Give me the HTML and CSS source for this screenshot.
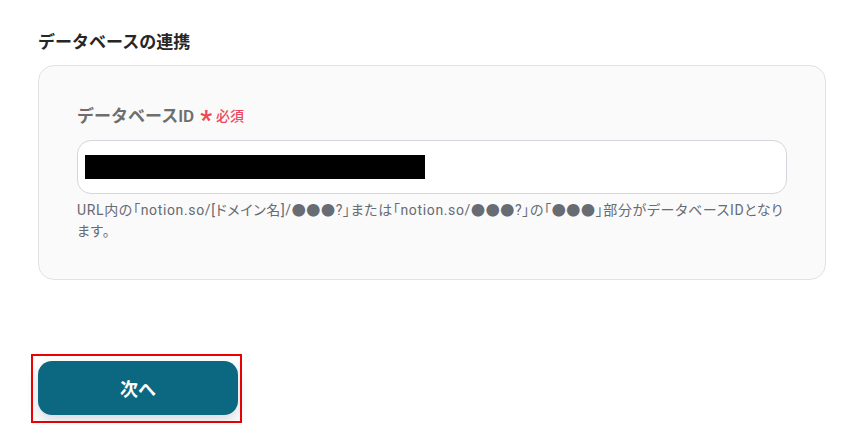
FILE: index.html
```html
<!DOCTYPE html>
<html lang="ja">
<head>
    <meta charset="UTF-8">
    <meta name="viewport" content="width=device-width, initial-scale=1.0">
    <title>データベースの連携</title>
    <link rel="stylesheet" href="styles.css">
</head>
<body>
    <div class="page">
        <h2 class="title">データベースの連携</h2>
        <div class="card">
            <div class="field">
                <label class="label">データベースID <span class="req"><span class="star">*</span>必須</span></label>
                <div class="input">
                    <div class="mask"></div>
                </div>
                <p class="help">URL内の「notion.so/[ドメイン名]/●●●?」または「notion.so/●●●?」の「●●●」部分がデータベースIDとなります。</p>
            </div>
        </div>
        <div class="actions">
            <div class="focus">
                <button class="next">次へ</button>
            </div>
        </div>
    </div>
</body>
</html>
```

FILE: styles.css
```css
body {
    margin: 0;
    background: #ffffff;
    font-family: Roboto, "Noto Sans CJK JP", sans-serif;
    color: #222222;
}

.page {
    padding: 30px 32px 0 38px;
}

.title {
    margin: 0 0 11px;
    font-size: 17px;
    font-weight: 700;
    line-height: 24px;
    color: #262626;
}

.card {
    background: #fafafa;
    border: 1px solid #e2e2e4;
    border-radius: 16px;
    padding: 38px 38px 37px;
}

.label {
    display: flex;
    align-items: center;
    gap: 6px;
    font-size: 17px;
    font-weight: 600;
    color: #6e6e6e;
    line-height: 24px;
}

.req {
    display: flex;
    align-items: center;
    gap: 4px;
    color: #f0475d;
    font-size: 14px;
    font-weight: 500;
}

.star {
    font-size: 26px;
    font-weight: 700;
    line-height: 16px;
    padding-top: 8px;
}

.input {
    margin-top: 12px;
    height: 52px;
    background: #ffffff;
    border: 1px solid #d3d6dd;
    border-radius: 14px;
    display: flex;
    align-items: center;
    padding: 0 7px;
}

.mask {
    width: 340px;
    height: 24px;
    background: #000000;
}

.help {
    margin: 6px 0 0;
    font-size: 14px;
    line-height: 21px;
    letter-spacing: 0.65px;
    color: #676b72;
    font-feature-settings: "palt";
}

.actions {
    margin-top: 74px;
    margin-left: -7px;
}

.focus {
    display: inline-block;
    border: 2px solid #ee0000;
    padding: 5px 2px 6px 5px;
}

.next {
    display: block;
    width: 200px;
    height: 54px;
    border: none;
    border-radius: 14px;
    background: #0c6881;
    color: #ffffff;
    font-family: Roboto, "Noto Sans CJK JP", sans-serif;
    font-size: 18px;
    font-weight: 700;
    box-shadow: 0 6px 14px rgba(30, 50, 80, 0.18);
    cursor: pointer;
}
```
